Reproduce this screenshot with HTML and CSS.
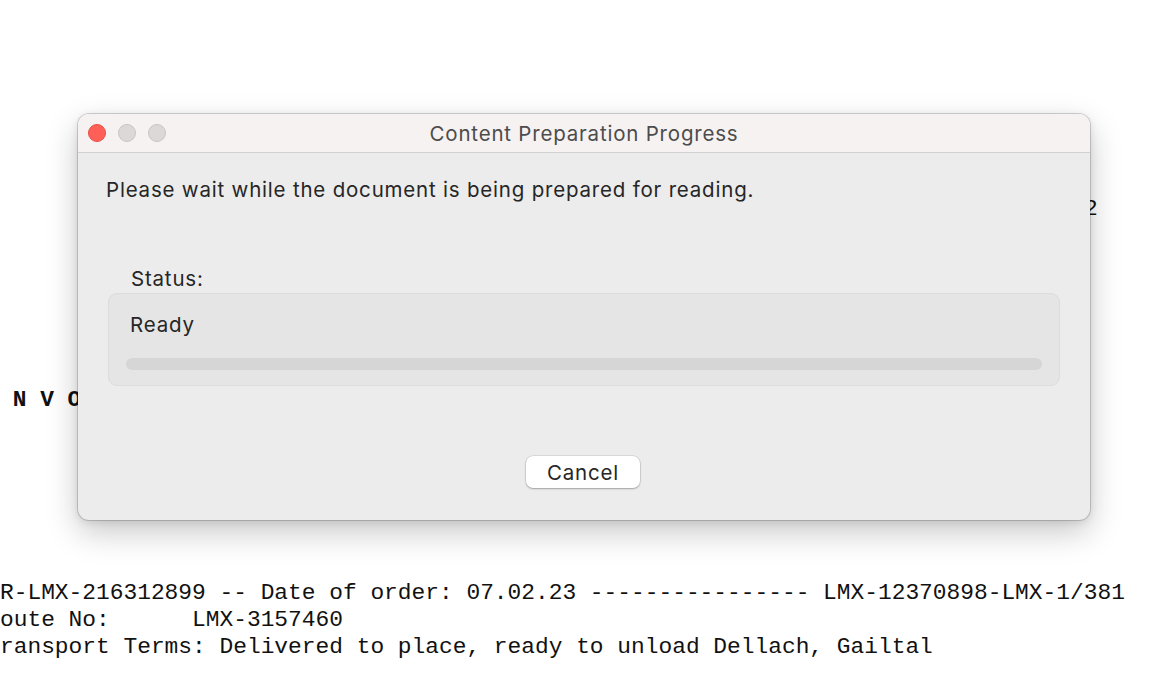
FILE: index.html
```html
<!DOCTYPE html>
<html>
<head>
<meta charset="utf-8">
<link rel="stylesheet" href="styles.css">
</head>
<body>
<div class="doc">
  <div class="line right-line">2</div>
  <div class="line bold-line"> N V O</div>
  <div class="bottom-lines">
    <div class="line">R-LMX-216312899 -- Date of order: 07.02.23 ---------------- LMX-12370898-LMX-1/381</div>
    <div class="line">oute No:      LMX-3157460</div>
    <div class="line">ransport Terms: Delivered to place, ready to unload Dellach, Gailtal</div>
  </div>
</div>

<div class="dialog">
  <div class="titlebar">
    <div class="lights">
      <span class="light red"></span>
      <span class="light grey"></span>
      <span class="light grey"></span>
    </div>
    <div class="title">Content Preparation Progress</div>
  </div>
  <div class="body">
    <p class="message">Please wait while the document is being prepared for reading.</p>
    <div class="status-label">Status:</div>
    <div class="status-box">
      <div class="status-text">Ready</div>
      <div class="progress"></div>
    </div>
    <div class="actions">
      <button class="btn">Cancel</button>
    </div>
  </div>
</div>
</body>
</html>
```

FILE: styles.css
```css
html, body {
  margin: 0;
  padding: 0;
  background: #ffffff;
  width: 1150px;
  height: 692px;
  overflow: hidden;
}

.doc {
  font-family: "Liberation Mono", monospace;
  font-size: 22.86px;
  color: #111;
  padding-top: 196px;
  display: flex;
  flex-direction: column;
}

.line {
  white-space: pre;
  line-height: 27.3px;
  height: 27.3px;
}

.right-line {
  align-self: flex-start;
  padding-left: 1084px;
}

.bold-line {
  margin-top: 164px;
  font-weight: bold;
  margin-left: -1px;
}

.bottom-lines {
  margin-top: 165px;
}

.dialog {
  position: absolute;
  left: 78px;
  top: 114px;
  width: 1012px;
  height: 406px;
  border-radius: 11px;
  background: #ececec;
  box-shadow: 0 0 0 1px rgba(0,0,0,0.16), 0 12px 32px rgba(0,0,0,0.22), 0 2px 8px rgba(0,0,0,0.1);
  overflow: hidden;
  font-family: "Inter", "Liberation Sans", sans-serif;
  letter-spacing: 0.8px;
  color: #262626;
  display: flex;
  flex-direction: column;
}

.titlebar {
  height: 38px;
  background: #f7f2f2;
  border-bottom: 1px solid #d3d0d0;
  display: flex;
  align-items: center;
  position: relative;
  flex-shrink: 0;
}

.lights {
  display: flex;
  gap: 12px;
  padding-left: 10px;
}

.light {
  width: 18px;
  height: 18px;
  border-radius: 50%;
  box-sizing: border-box;
}

.red {
  background: #fe5f57;
  border: 1px solid #ea4d45;
}

.grey {
  background: #dcd8d8;
  border: 1px solid #c8c4c4;
}

.title {
  position: absolute;
  left: 0;
  right: 0;
  text-align: center;
  font-size: 20.5px;
  color: #4c4c4c;
  pointer-events: none;
}

.body {
  padding: 0 30px 0 30px;
  display: flex;
  flex-direction: column;
  flex: 1;
}

.message {
  margin: 24px 0 0 -2px;
  font-size: 20.5px;
  line-height: 26px;
}

.status-label {
  margin: 63px 0 0 23px;
  font-size: 20.5px;
  line-height: 26px;
}

.status-box {
  margin-top: 1px;
  height: 93px;
  box-sizing: border-box;
  background: #e5e5e5;
  border: 1px solid #dcdcdc;
  border-radius: 9px;
  padding: 17px 17px 0 17px;
  display: flex;
  flex-direction: column;
}

.status-text {
  font-size: 20.5px;
  line-height: 28px;
  padding-left: 4px;
}

.progress {
  margin-top: 19px;
  height: 12px;
  border-radius: 6px;
  background: #d6d6d6;
}

.actions {
  display: flex;
  justify-content: center;
  margin-top: 70px;
}

.btn {
  width: 114px;
  height: 32px;
  margin-left: -2px;
  border: none;
  border-radius: 7px;
  background: #ffffff;
  box-shadow: 0 0 0 0.5px rgba(0,0,0,0.15), 0 1px 2px rgba(0,0,0,0.25);
  font-family: "Inter", "Liberation Sans", sans-serif;
  letter-spacing: 0.8px;
  font-size: 20.5px;
  color: #262626;
  padding: 0;
}
```
